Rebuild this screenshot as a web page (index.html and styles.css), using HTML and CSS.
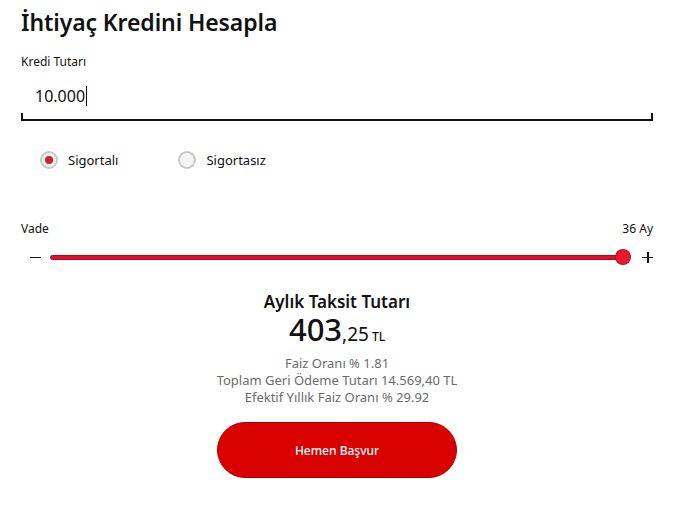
FILE: index.html
```html
<!DOCTYPE html>
<html lang="tr">
<head>
    <meta charset="UTF-8">
    <meta name="viewport" content="width=device-width, initial-scale=1.0">
    <title>İhtiyaç Kredini Hesapla</title>
    <link rel="stylesheet" href="styles.css">
</head>
<body>

<div class="hesaplama">
    <h2>İhtiyaç Kredini Hesapla</h2>

    <label class="etiket" for="tutar">Kredi Tutarı</label>
    <div class="tutar-kutu">
        <span class="tutar">10.000</span><span class="imlec"></span>
    </div>

    <div class="secenekler">
        <div class="secenek">
            <span class="radyo secili"></span>
            <span>Sigortalı</span>
        </div>
        <div class="secenek">
            <span class="radyo"></span>
            <span>Sigortasız</span>
        </div>
    </div>

    <div class="vade-baslik">
        <span>Vade</span>
        <span>36 Ay</span>
    </div>
    <div class="vade">
        <span class="isaret eksi"></span>
        <div class="cubuk">
            <span class="tutamac"></span>
        </div>
        <span class="isaret arti"></span>
    </div>

    <div class="sonuc">
        <h3>Aylık Taksit Tutarı</h3>
        <p class="taksit">403<span class="kurus">,25</span><span class="tl">TL</span></p>
        <p class="detay">Faiz Oranı % 1.81</p>
        <p class="detay">Toplam Geri Ödeme Tutarı 14.569,40 TL</p>
        <p class="detay">Efektif Yıllık Faiz Oranı % 29.92</p>
        <button>Hemen Başvur</button>
    </div>
</div>

</body>
</html>
```

FILE: styles.css
```css
body {
    font-family: "Noto Sans", "Open Sans", sans-serif;
    margin: 0;
    background-color: white;
    color: #111;
}
.hesaplama {
    margin: 0 29px 0 21px;
    padding-top: 6px;
}
h2 {
    margin: 0;
    font-size: 23px;
    font-weight: 600;
    line-height: 32px;
    letter-spacing: -0.1px;
}
.etiket {
    display: block;
    margin-top: 16px;
    font-size: 12px;
    line-height: 16px;
}
.tutar-kutu {
    display: flex;
    align-items: center;
    margin-top: 15px;
    padding-left: 14px;
    padding-bottom: 14px;
    box-shadow: inset 0 -2px 0 #111;
    position: relative;
}
.tutar-kutu::before,
.tutar-kutu::after {
    content: "";
    position: absolute;
    bottom: 0;
    width: 2px;
    height: 8px;
    background: #111;
}
.tutar-kutu::before { left: 0; }
.tutar-kutu::after { right: 0; }
.tutar {
    font-size: 16px;
    line-height: 22px;
}
.imlec {
    width: 1px;
    height: 20px;
    margin-left: 1px;
    background: #111;
}
.secenekler {
    display: flex;
    gap: 60px;
    margin-top: 30px;
    padding-left: 19px;
    font-size: 13px;
}
.secenek {
    display: flex;
    align-items: center;
    gap: 10px;
}
.radyo {
    width: 14px;
    height: 14px;
    border: 2px solid #c8c8c8;
    border-radius: 50%;
    background: #f4f4f4;
    position: relative;
}
.radyo.secili::after {
    content: "";
    position: absolute;
    top: 3px;
    left: 3px;
    width: 8px;
    height: 8px;
    border-radius: 50%;
    background: #d71b2e;
}
.vade-baslik {
    display: flex;
    justify-content: space-between;
    margin-top: 52px;
    font-size: 12px;
    line-height: 16px;
}
.vade {
    display: flex;
    align-items: center;
    gap: 9px;
    margin-top: 11px;
    height: 18px;
}
.isaret {
    width: 11px;
    height: 11px;
    position: relative;
    margin-left: 9px;
}
.arti {
    margin-left: 9px;
}
.isaret::before,
.isaret::after {
    content: "";
    position: absolute;
    background: #111;
}
.isaret::before {
    left: 0;
    top: 5px;
    width: 11px;
    height: 1.5px;
}
.arti::after {
    left: 5px;
    top: 0;
    width: 1.5px;
    height: 11px;
}
.cubuk {
    flex: 1;
    height: 3px;
    background: #e3102b;
    border: 1px solid #a01020;
    border-radius: 3px;
    position: relative;
}
.tutamac {
    position: absolute;
    right: -7px;
    top: -6px;
    width: 14px;
    height: 14px;
    border-radius: 50%;
    background: #e8192f;
    box-shadow: 0 0 0 1px #b01020;
}
.sonuc {
    display: flex;
    flex-direction: column;
    align-items: center;
    margin-top: 25px;
}
h3 {
    margin: 0;
    font-size: 17px;
    font-weight: 600;
    line-height: 22px;
}
.taksit {
    margin: 0 0 2px;
    font-size: 31px;
    font-weight: 500;
    line-height: 32px;
}
.kurus {
    font-size: 19px;
    font-weight: 400;
}
.tl {
    margin-left: 3px;
    font-size: 12px;
    font-weight: 500;
}
.detay {
    margin: 0;
    font-size: 13px;
    line-height: 17px;
    color: #6b6b6b;
}
button {
    width: 240px;
    height: 56px;
    margin-top: 16px;
    background-color: #d90000;
    color: white;
    border: 1px solid #b00000;
    border-radius: 28px;
    font-family: inherit;
    font-size: 12px;
    font-weight: 500;
    cursor: pointer;
}
```
